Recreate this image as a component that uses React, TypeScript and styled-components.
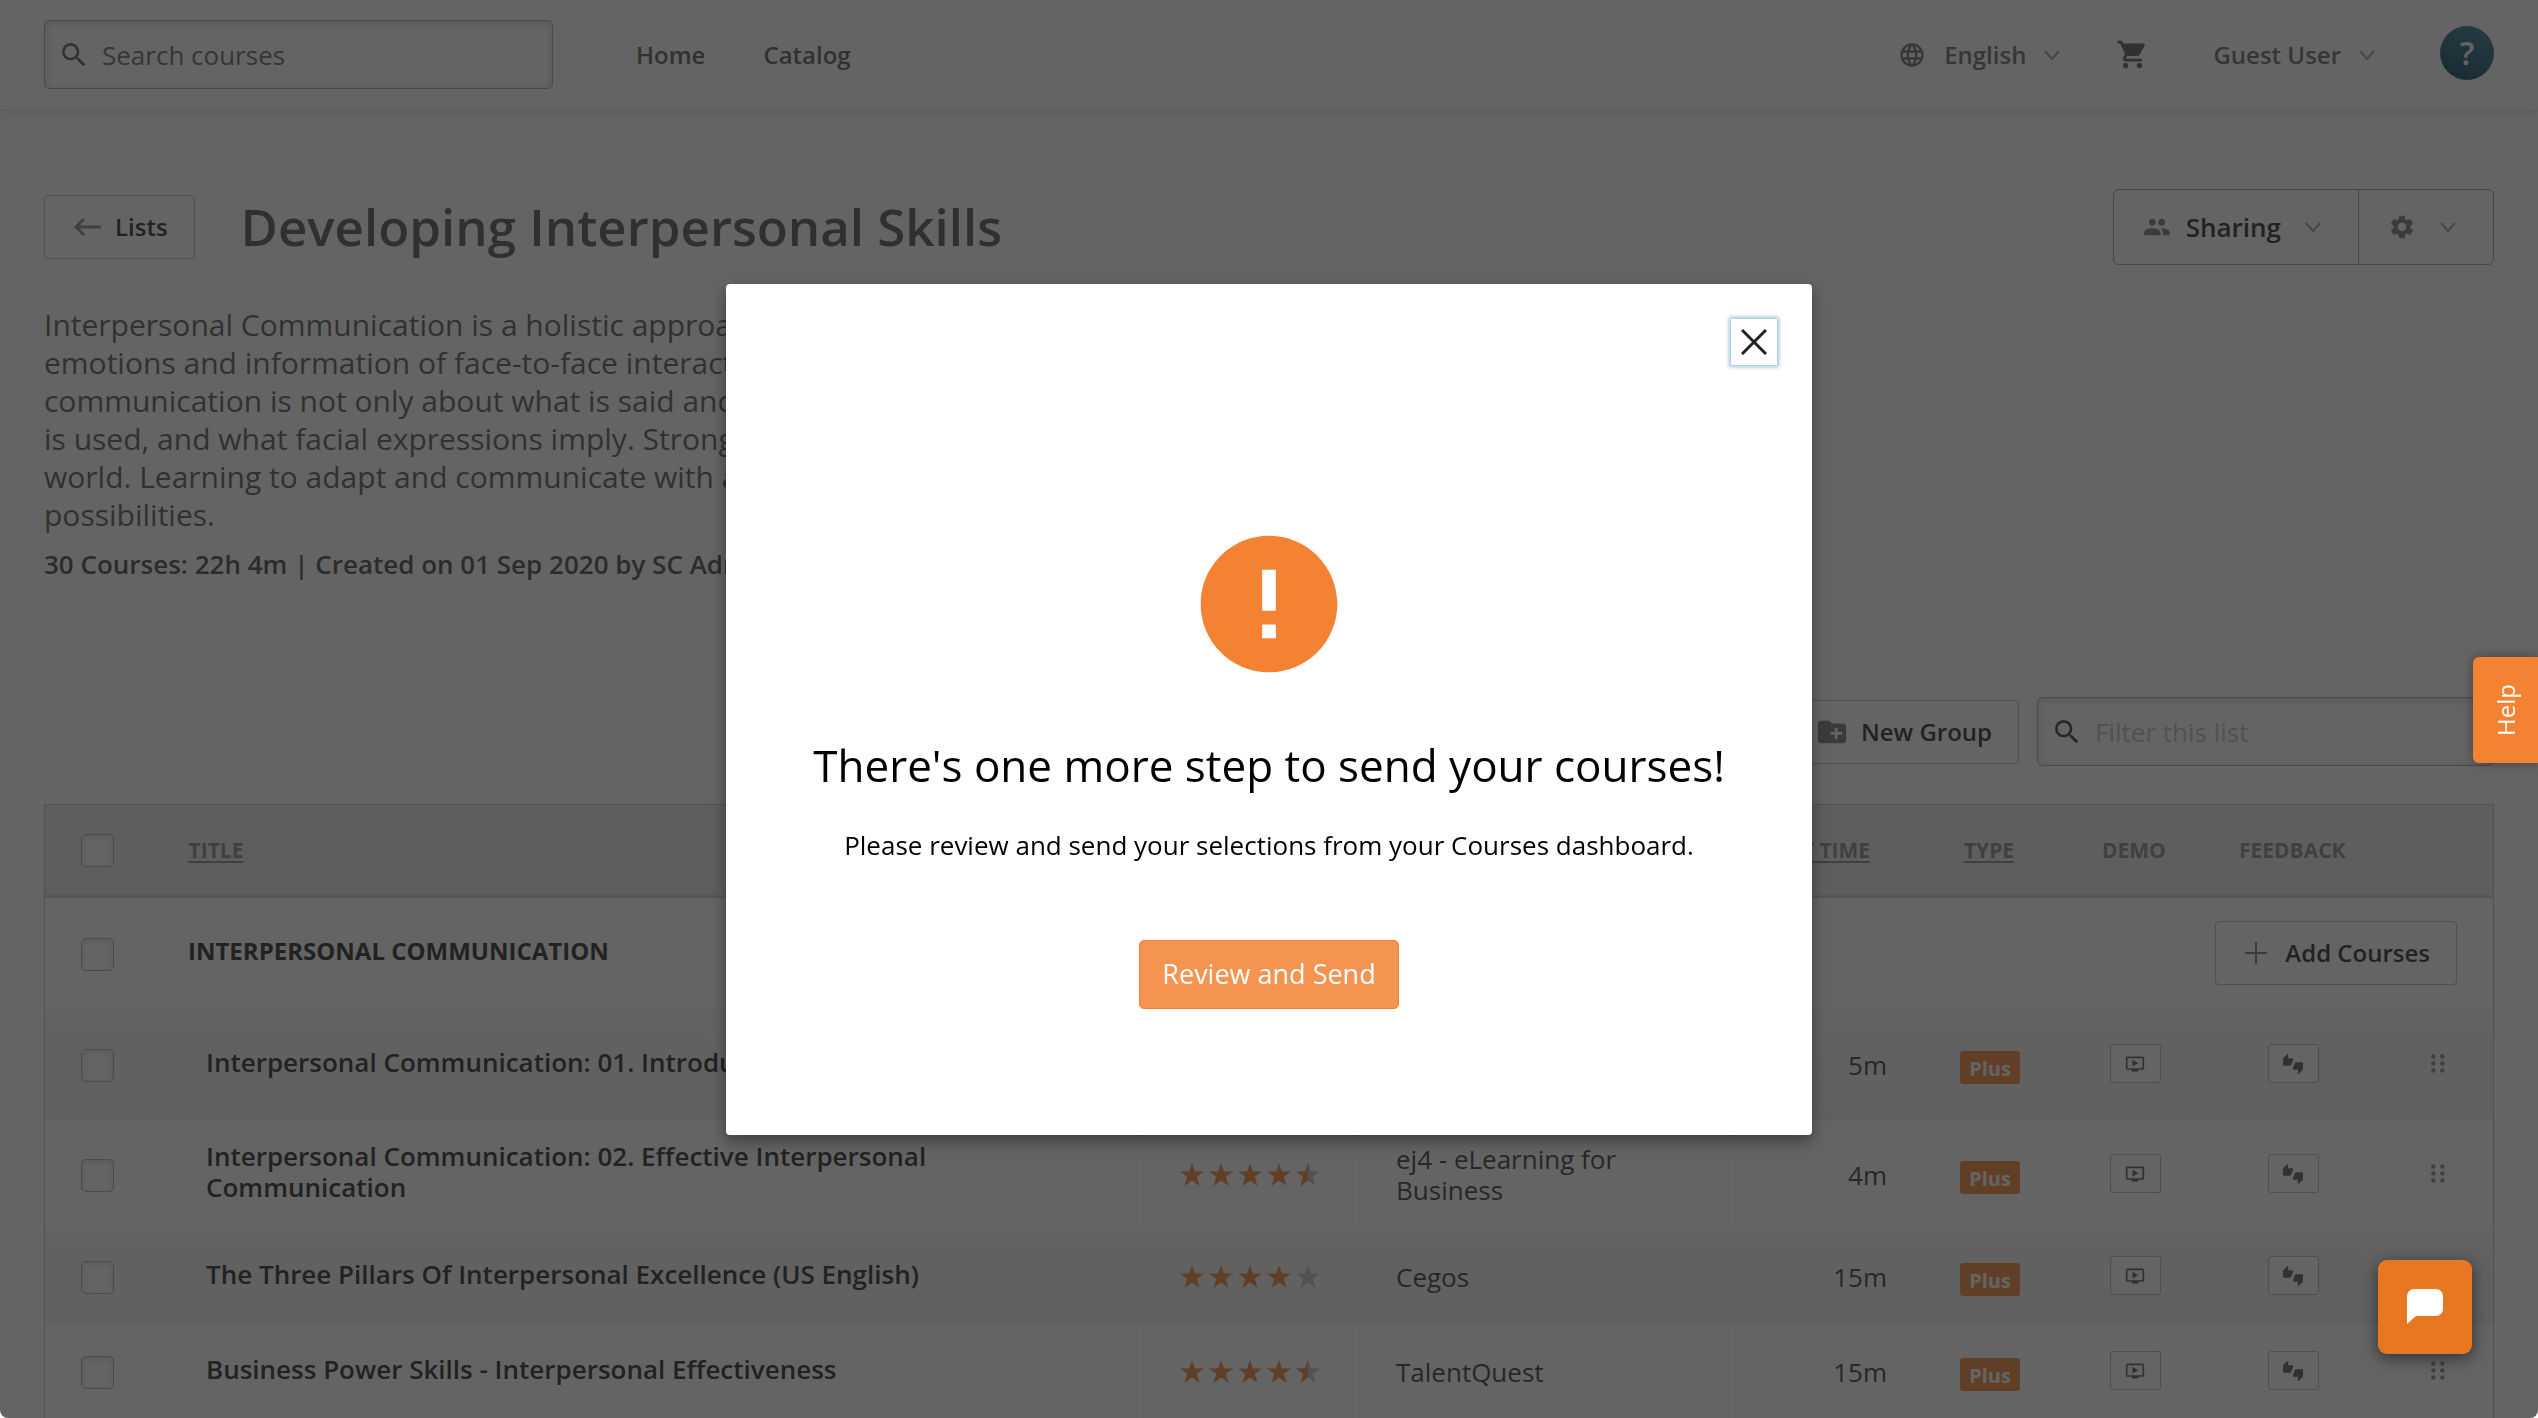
import React from "react";
import styled, { createGlobalStyle } from "styled-components";
import {
  MdSearch,
  MdLanguage,
  MdShoppingCart,
  MdPeople,
  MdSettings,
  MdCreateNewFolder,
  MdOndemandVideo,
  MdThumbsUpDown,
  MdError,
} from "react-icons/md";

const GlobalStyle = createGlobalStyle`
  *, *::before, *::after { box-sizing: border-box; }
  html, body, #root { height: 100%; }
  body {
    margin: 0;
    overflow: hidden;
    background: #fff;
    color: #333;
    font-family: "Open Sans", "Noto Sans", sans-serif;
    font-size: 26px;
    line-height: 32px;
  }
  button, input { font: inherit; color: inherit; }
  button { cursor: pointer; }
  svg { display: block; flex: none; }
`;

const Page = styled.div`
  height: 100vh;
  overflow: hidden;
`;

const Header = styled.header`
  display: flex;
  align-items: center;
  height: 109px;
  padding: 0 44px;
  box-shadow: 0 2px 10px rgba(0, 0, 0, 0.12);
`;

const SearchField = styled.label<{ $width: number }>`
  display: flex;
  align-items: center;
  gap: 12px;
  width: ${(p) => p.$width}px;
  height: 69px;
  padding: 0 13px;
  border: 1px solid #a8a8a8;
  border-radius: 5px;
  box-shadow: inset 0 2px 8px rgba(0, 0, 0, 0.2);
`;

const SearchInput = styled.input<{ $placeholder: string }>`
  flex: 1;
  min-width: 0;
  padding: 0;
  border: 0;
  outline: 0;
  background: transparent;
  &::placeholder { color: ${(p) => p.$placeholder}; opacity: 1; }
`;

const Nav = styled.nav`
  display: flex;
  gap: 58px;
  margin-left: 83px;
`;

const NavLink = styled.a`
  color: #555;
  font-size: 24px;
  font-weight: 600;
  text-decoration: none;
`;

const Account = styled.div`
  display: flex;
  align-items: center;
  margin-left: auto;
`;

const MenuButton = styled.button`
  display: flex;
  align-items: center;
  gap: 18px;
  padding: 0;
  border: 0;
  background: none;
  color: #666;
  font-size: 24px;
  font-weight: 600;
`;

const CartButton = styled.button`
  margin: 0 64px 0 56px;
  padding: 0;
  border: 0;
  background: none;
  color: #555;
`;

const Avatar = styled.button`
  width: 54px;
  height: 54px;
  margin: 0 0 4px 65px;
  padding: 0;
  border: 0;
  border-radius: 50%;
  background: linear-gradient(20deg, #004158, #37788f);
  color: #fff;
  font-size: 32px;
  font-weight: 600;
`;

const Main = styled.main`
  padding: 80px 44px 0;
`;

const TitleBar = styled.div`
  display: flex;
  align-items: center;
  height: 76px;
`;

const OutlineButton = styled.button<{ $gap: number }>`
  display: flex;
  align-items: center;
  gap: ${(p) => p.$gap}px;
  height: 64px;
  padding: 0 26px 0 29px;
  border: 1px solid #bbb;
  border-radius: 4px;
  background: #fff;
  color: #222;
  font-size: 24px;
  font-weight: 600;
`;

const Title = styled.h1`
  margin: 0 auto 0 46px;
  padding-bottom: 2px;
  color: #505050;
  font-size: 51px;
  font-weight: 600;
  line-height: 68px;
`;

const ButtonGroup = styled.div`
  display: flex;
  height: 76px;
  border: 1px solid #999;
  border-radius: 6px;
`;

const GroupButton = styled.button<{ $divided?: boolean }>`
  display: flex;
  align-items: center;
  padding: 0 37px 0 29px;
  border: 0;
  border-left: ${(p) => (p.$divided ? "1px solid #999" : "0")};
  background: none;
  color: #222;
  font-weight: 600;
  & > span { margin: 0 24px 0 15px; }
  & > svg + svg { margin-left: 24px; }
`;

const Description = styled.p`
  width: 1100px;
  margin: 41px 0 0;
  color: #555;
  font-size: 30px;
  line-height: 38px;
`;

const Meta = styled.p`
  margin: 14px 0 0;
  color: #444;
  font-weight: 600;
  line-height: 32px;
`;

const Tools = styled.div`
  display: flex;
  align-items: center;
  justify-content: flex-end;
  gap: 18px;
  margin: 117px 0 38px;
`;

const Table = styled.table`
  width: 100%;
  border: 1px solid #c0c0c0;
  border-collapse: separate;
  border-spacing: 0;
  table-layout: fixed;
`;

const Col = styled.col<{ $width?: number }>`
  width: ${(p) => (p.$width ? `${p.$width}px` : "auto")};
`;

const HeadCell = styled.th<{ $align?: string }>`
  height: 93px;
  padding: 0 36px;
  border-bottom: 3px solid #d4d4d4;
  background: #ebebeb;
  color: #888;
  font-size: 21px;
  font-weight: 700;
  text-align: ${(p) => p.$align ?? "left"};
  text-transform: uppercase;
  white-space: nowrap;
`;

const SortButton = styled.button`
  min-width: 60px;
  padding: 0;
  border: 0;
  background: none;
  text-decoration: underline;
  text-transform: uppercase;
  text-underline-offset: 3px;
`;

const Checkbox = styled.input`
  appearance: none;
  display: block;
  width: 33px;
  height: 33px;
  margin: 0;
  border: 1px solid #aaa;
  border-radius: 5px;
  background: #fff;
  box-shadow: inset 0 2px 6px rgba(0, 0, 0, 0.15);
`;

const GroupCell = styled.td`
  height: 112px;
  padding: 0 36px;
  color: #222;
  font-size: 24px;
  font-weight: 700;
  text-transform: uppercase;
`;

const GroupTitle = styled(GroupCell)`
  padding: 0 38px 6px;
`;

const GroupAction = styled(GroupCell)`
  padding-bottom: 2px;
  text-transform: none;
  & > button { margin-left: auto; }
`;

const CourseRow = styled.tr<{ $height: number; $shaded: boolean }>`
  height: ${(p) => p.$height}px;
  background: ${(p) => (p.$shaded ? "linear-gradient(#f8f8f8, #f2f2f2)" : "#fff")};
`;

const Cell = styled.td<{ $align?: string }>`
  padding: 0 36px;
  border-left: 1px solid #f3f3f3;
  line-height: 31px;
  text-align: ${(p) => p.$align ?? "left"};
  &:first-child { border-left: 0; }
`;

const TitleCell = styled(Cell)`
  padding: 0 37px 6px 55px;
`;

const CourseLink = styled.a`
  color: #222;
  font-size: 26px;
  font-weight: 600;
  text-decoration: none;
`;

const ActionCell = styled(Cell)`
  padding: 0 0 3px;
  & > * { margin: 0 auto; }
`;

const Badge = styled.span`
  display: block;
  width: 60px;
  height: 33px;
  margin-top: 4px;
  border-radius: 3px;
  background: #f48233;
  color: #fff;
  font-size: 20px;
  font-weight: 700;
  line-height: 35px;
  text-align: center;
`;

const IconButton = styled.button`
  display: grid;
  place-items: center;
  width: 51px;
  height: 39px;
  padding: 0;
  border: 1px solid #b4b4b4;
  border-radius: 3px;
  background: #fff;
  color: #555;
`;

const Backdrop = styled.div`
  position: fixed;
  inset: 0;
  display: grid;
  place-items: center;
  border-radius: 0 0 8px 8px;
  background: rgba(34, 34, 34, 0.7);
`;

const Dialog = styled.section`
  display: flex;
  flex-direction: column;
  align-items: center;
  width: 1086px;
  padding: 35px 35px 126px;
  border-radius: 4px;
  background: #fff;
  color: #000;
  box-shadow: 0 6px 16px rgba(0, 0, 0, 0.4);
`;

const CloseButton = styled.button`
  display: grid;
  place-items: center;
  align-self: flex-end;
  width: 46px;
  height: 46px;
  padding: 0;
  border: 0;
  background: #fff;
  color: #222;
  box-shadow: 0 0 4px 2px #9cc3dd;
`;

const AlertIcon = styled(MdError)`
  margin-top: 157px;
  color: #f48233;
`;

const DialogTitle = styled.h2`
  margin: 49px 0 0;
  font-size: 44px;
  font-weight: 400;
  line-height: 60px;
`;

const DialogText = styled.p`
  margin: 32px 0 77px;
  font-size: 26px;
  line-height: 36px;
`;

const PrimaryButton = styled.button`
  height: 69px;
  padding: 0 22px;
  border: 1px solid #f28030;
  border-radius: 5px;
  background: #f59350;
  color: #fff;
  font-size: 27px;
`;

const HelpTab = styled.button`
  position: fixed;
  top: 657px;
  right: 0;
  width: 65px;
  height: 106px;
  padding: 0;
  border: 0;
  border-radius: 6px 0 0 6px;
  background: #f48233;
  color: #fff;
  font-size: 24px;
  line-height: 65px;
  writing-mode: vertical-rl;
  box-shadow: 0 0 12px rgba(0, 0, 0, 0.35);
  & > span { display: block; transform: rotate(180deg); }
`;

const ChatButton = styled.button`
  position: fixed;
  right: 66px;
  bottom: 64px;
  display: grid;
  place-items: center;
  width: 94px;
  height: 94px;
  padding: 0;
  border: 0;
  border-radius: 9px;
  background: #e87722;
  color: #fff;
  box-shadow: 0 4px 16px rgba(0, 0, 0, 0.5);
`;

const Chevron = () => (
  <svg width="16" height="10" viewBox="0 0 16 10" fill="none" stroke="#999" strokeWidth="2">
    <path d="M1 1l7 8 7-8" />
  </svg>
);

const ArrowLeft = () => (
  <svg width="28" height="18" viewBox="0 0 28 18" fill="none" stroke="#888" strokeWidth="3">
    <path d="M27 9H3M10 1L2 9l8 8" />
  </svg>
);

const Plus = () => (
  <svg width="22" height="22" viewBox="0 0 22 22" stroke="#777" strokeWidth="2">
    <path d="M11 0v22M0 11h22" />
  </svg>
);

const Close = () => (
  <svg width="26" height="26" viewBox="0 0 26 26" stroke="currentColor" strokeWidth="3">
    <path d="M1 1l24 24M25 1L1 25" />
  </svg>
);

const Grip = () => (
  <svg width="14" height="19" viewBox="0 0 14 19" fill="#888">
    {[2.3, 11.3].map((x) => [2.5, 9.5, 16.5].map((y) => <circle key={`${x}-${y}`} cx={x} cy={y} r="2.2" />))}
  </svg>
);

const ChatBubble = () => (
  <svg width="36" height="36" viewBox="0 0 36 36" fill="currentColor">
    <path d="M7 0h22a7 7 0 0 1 7 7v13a7 7 0 0 1-7 7H9l-9 8V7a7 7 0 0 1 7-7z" />
  </svg>
);

const STAR = "M12 0l3 8.500h9l-7.200 5.300L19.500 23 12 17.400 4.500 23l2.700-9.200L0 8.500h9z";
const HALF_STAR = "M12 0v17.400L4.500 23l2.700-9.200L0 8.500h9z";

const Stars = ({ value }: { value: number }) => (
  <svg width="140" height="24" viewBox="0 0 140 24" role="img" aria-label={`${value} out of 5 stars`}>
    {[0, 1, 2, 3, 4].map((i) => (
      <g key={i} transform={`translate(${i * 29} 0)`}>
        <path d={STAR} fill={value - i >= 1 ? "#f48233" : "#c4c4c4"} />
        {value - i === 0.5 && <path d={HALF_STAR} fill="#f48233" />}
      </g>
    ))}
  </svg>
);

const courses = [
  { title: "Interpersonal Communication: 01. Introduction", stars: 4.5, provider: "ej4 - eLearning for Business", time: "5m", height: 110 },
  { title: "Interpersonal Communication: 02. Effective Interpersonal Communication", stars: 4.5, provider: "ej4 - eLearning for Business", time: "4m", height: 110 },
  { title: "The Three Pillars Of Interpersonal Excellence (US English)", stars: 4, provider: "Cegos", time: "15m", height: 94 },
  { title: "Business Power Skills - Interpersonal Effectiveness", stars: 4.5, provider: "TalentQuest", time: "15m", height: 96 },
];

export default function App() {
  return (
    <>
      <GlobalStyle />
      <Page>
        <Header>
          <SearchField $width={509}>
            <MdSearch size={32} color="#555" />
            <SearchInput type="text" aria-label="Search courses" placeholder="Search courses" $placeholder="#666" />
          </SearchField>
          <Nav>
            <NavLink href="#home">Home</NavLink>
            <NavLink href="#catalog">Catalog</NavLink>
          </Nav>
          <Account>
            <MenuButton>
              <MdLanguage size={28} />
              English
              <Chevron />
            </MenuButton>
            <CartButton aria-label="Cart">
              <MdShoppingCart size={33} />
            </CartButton>
            <MenuButton>
              Guest User
              <Chevron />
            </MenuButton>
            <Avatar>?</Avatar>
          </Account>
        </Header>

        <Main>
          <TitleBar>
            <OutlineButton $gap={13}>
              <ArrowLeft />
              Lists
            </OutlineButton>
            <Title>Developing Interpersonal Skills</Title>
            <ButtonGroup>
              <GroupButton>
                <MdPeople size={28} color="#777" />
                <span>Sharing</span>
                <Chevron />
              </GroupButton>
              <GroupButton $divided aria-label="Settings">
                <MdSettings size={28} color="#777" />
                <Chevron />
              </GroupButton>
            </ButtonGroup>
          </TitleBar>

          <Description>
            Interpersonal Communication is a holistic approach to the
            <br />
            emotions and information of face-to-face interactions. Good
            <br />
            communication is not only about what is said and how tone
            <br />
            is used, and what facial expressions imply. Strong skills open the
            <br />
            world. Learning to adapt and communicate with all opens
            <br />
            possibilities.
          </Description>
          <Meta>30 Courses: 22h 4m | Created on 01 Sep 2020 by SC Admin</Meta>

          <Tools>
            <OutlineButton $gap={12}>
              <MdCreateNewFolder size={34} color="#777" />
              New Group
            </OutlineButton>
            <SearchField $width={457}>
              <MdSearch size={32} color="#333" />
              <SearchInput type="text" aria-label="Filter this list" placeholder="Filter this list" $placeholder="#c0c0c0" />
            </SearchField>
          </Tools>

          <Table>
            <colgroup>
              <Col $width={105} />
              <Col />
              <Col $width={216} />
              <Col $width={369} />
              <Col $width={195} />
              <Col $width={143} />
              <Col $width={137} />
              <Col $width={179} />
              <Col $width={111} />
            </colgroup>
            <thead>
              <tr>
                <HeadCell><Checkbox type="checkbox" aria-label="Select all" /></HeadCell>
                <HeadCell><SortButton>Title</SortButton></HeadCell>
                <HeadCell />
                <HeadCell />
                <HeadCell><SortButton>Seat Time</SortButton></HeadCell>
                <HeadCell><SortButton>Type</SortButton></HeadCell>
                <HeadCell>Demo</HeadCell>
                <HeadCell>Feedback</HeadCell>
                <HeadCell />
              </tr>
            </thead>
            <tbody>
              <tr>
                <GroupCell><Checkbox type="checkbox" aria-label="Select group" /></GroupCell>
                <GroupTitle colSpan={5}>Interpersonal Communication</GroupTitle>
                <GroupAction colSpan={3}>
                  <OutlineButton $gap={18}>
                    <Plus />
                    Add Courses
                  </OutlineButton>
                </GroupAction>
              </tr>
              {courses.map((c, i) => (
                <CourseRow key={c.title} $height={c.height} $shaded={i % 2 === 0}>
                  <Cell><Checkbox type="checkbox" aria-label={c.title} /></Cell>
                  <TitleCell><CourseLink href="#course">{c.title}</CourseLink></TitleCell>
                  <Cell><Stars value={c.stars} /></Cell>
                  <Cell>{c.provider}</Cell>
                  <Cell $align="right">{c.time}</Cell>
                  <Cell><Badge>Plus</Badge></Cell>
                  <ActionCell><IconButton aria-label="Watch demo"><MdOndemandVideo size={20} /></IconButton></ActionCell>
                  <ActionCell><IconButton aria-label="Give feedback"><MdThumbsUpDown size={20} /></IconButton></ActionCell>
                  <ActionCell><Grip /></ActionCell>
                </CourseRow>
              ))}
            </tbody>
          </Table>
        </Main>
      </Page>

      <Backdrop>
        <Dialog role="dialog" aria-modal="true" aria-labelledby="dialog-title">
          <CloseButton aria-label="Close"><Close /></CloseButton>
          <AlertIcon size={164} />
          <DialogTitle id="dialog-title">There's one more step to send your courses!</DialogTitle>
          <DialogText>Please review and send your selections from your Courses dashboard.</DialogText>
          <PrimaryButton>Review and Send</PrimaryButton>
        </Dialog>
      </Backdrop>
      <HelpTab><span>Help</span></HelpTab>
      <ChatButton aria-label="Open chat"><ChatBubble /></ChatButton>
    </>
  );
}
